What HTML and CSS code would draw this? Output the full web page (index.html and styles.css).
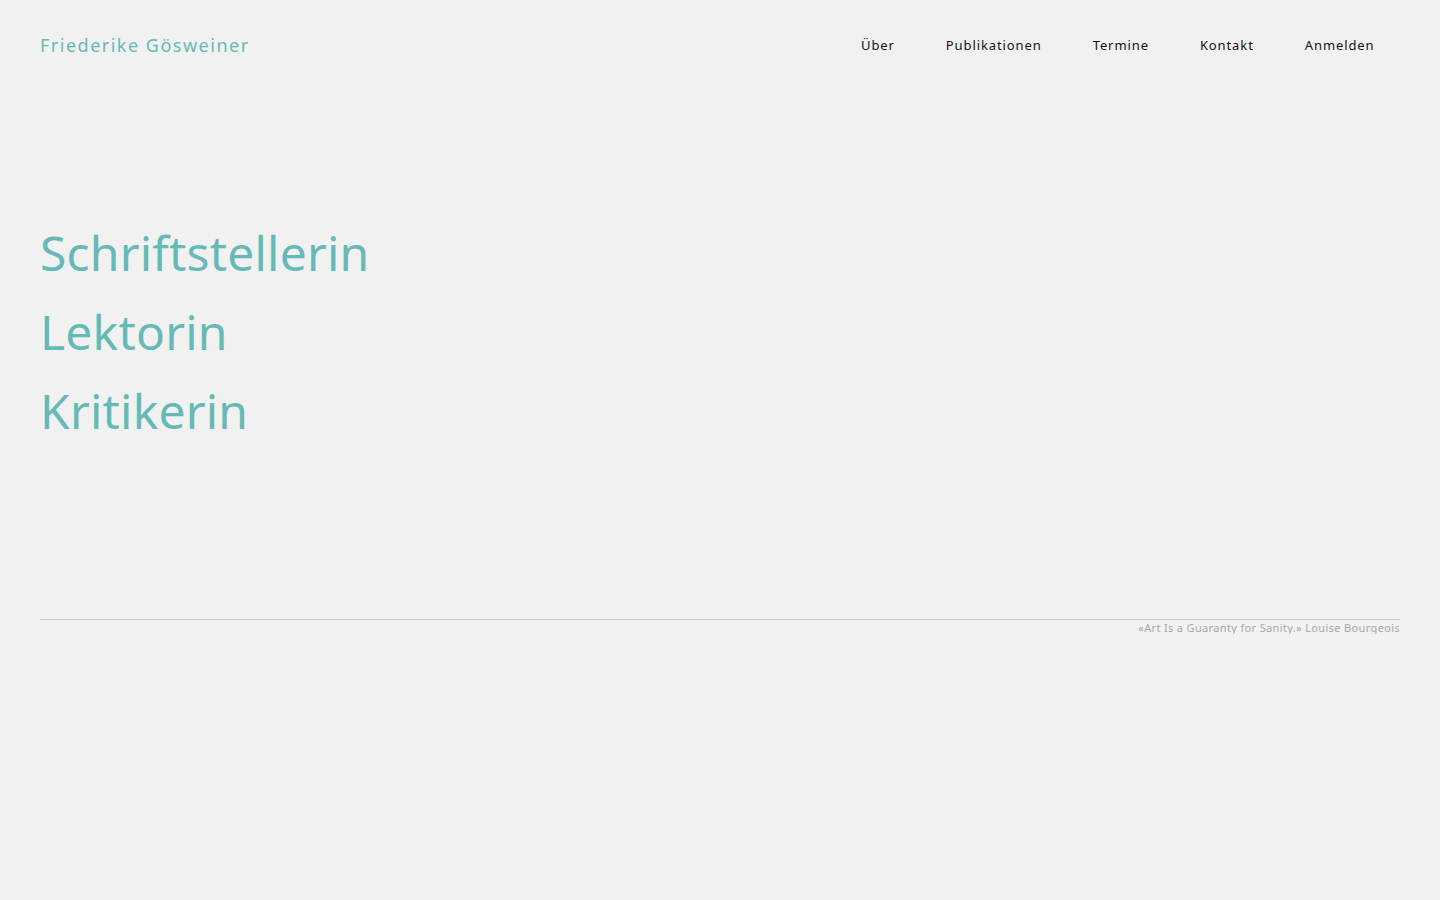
FILE: index.html
```html
<!DOCTYPE html>
<html lang="de">
<head>
<meta charset="utf-8">
<title>Friederike Gösweiner</title>
<link rel="stylesheet" href="styles.css">
</head>
<body>
<div class="hero">
  <header class="header">
    <a class="brand" href="#">Friederike Gösweiner</a>
    <nav class="nav">
      <a href="#">Über</a>
      <a href="#">Publikationen</a>
      <a href="#">Termine</a>
      <a href="#">Kontakt</a>
      <a href="#">Anmelden</a>
    </nav>
  </header>
  <div class="roles">
    <div class="role">Schriftstellerin</div>
    <div class="role">Lektorin</div>
    <div class="role">Kritikerin</div>
  </div>
</div>
<footer class="footer">
  <div class="quote">«Art Is a Guaranty for Sanity.» Louise Bourgeois</div>
</footer>
</body>
</html>
```
FILE: styles.css
```css
html, body {
  margin: 0;
  padding: 0;
  background: #f2f2f2;
  font-family: "Noto Sans", "DejaVu Sans", sans-serif;
}
a { text-decoration: none; }
.hero {
  background: #f1f1f1;
  height: 540px;
  padding: 0 40px;
  box-sizing: border-box;
}
.header {
  display: flex;
  justify-content: space-between;
  align-items: center;
  height: 90px;
}
.brand {
  color: #66bab5;
  font-size: 18px;
  letter-spacing: 1.5px;
}
.nav {
  display: flex;
}
.nav a {
  color: #111;
  font-size: 13px;
  letter-spacing: 0.9px;
  padding: 0 25.5px;
}
.roles {
  padding-top: 123px;
}
.role {
  color: #66bab5;
  font-size: 48px;
  line-height: 79px;
  letter-spacing: 0.2px;
}
.footer {
  padding: 79px 40px 0;
}
.quote {
  border-top: 1px solid #cccccc;
  text-align: right;
  font-size: 11px;
  line-height: 13px;
  letter-spacing: 0.35px;
  color: #a8a8a8;
  padding-top: 1px;
}
```
